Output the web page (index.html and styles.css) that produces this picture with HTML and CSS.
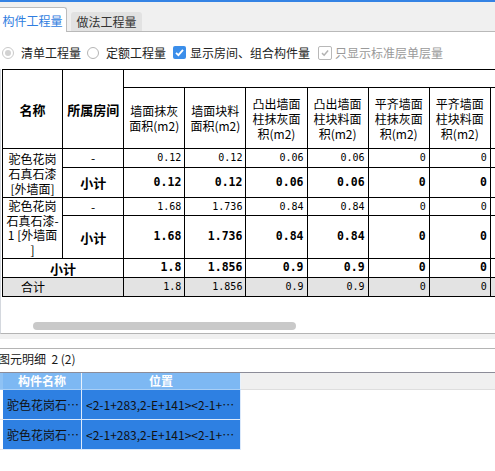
FILE: index.html
```html
<!DOCTYPE html>
<html lang="zh">
<head>
<meta charset="utf-8">
<title>构件工程量</title>
<link rel="stylesheet" href="styles.css">
</head>
<body>
<div class="topbar"></div>
<div class="tabs">
  <div class="tab active">构件工程量</div>
  <div class="tab">做法工程量</div>
</div>
<div class="options">
  <label class="opt"><span class="radio dim"></span>清单工程量</label>
  <label class="opt"><span class="radio"></span>定额工程量</label>
  <label class="opt"><span class="check on"><svg viewBox="0 0 13 13" width="13" height="13"><path d="M3 6.8 L5.4 9.2 L10 3.8" fill="none" stroke="#fff" stroke-width="1.8"/></svg></span>显示房间、组合构件量</label>
  <label class="opt disabled"><span class="check off"><svg viewBox="0 0 14 14" width="14" height="14"><path d="M3.5 7.2 L6 9.6 L10.6 4.2" fill="none" stroke="#b3b3b3" stroke-width="1.8"/></svg></span>只显示标准层单层量</label>
</div>
<div class="table-area">
  <table class="qty">
    <colgroup>
      <col class="c1"><col class="cn"><col class="cn"><col class="cn"><col class="cn"><col class="cn"><col class="cn"><col class="cn"><col class="cn">
    </colgroup>
    <thead>
      <tr class="r-h1">
        <th rowspan="2" class="hb">名称</th>
        <th rowspan="2" class="hb">所属房间</th>
        <th colspan="7" class="group"></th>
      </tr>
      <tr class="r-h2">
        <th>墙面抹灰<br>面积(m2)</th>
        <th>墙面块料<br>面积(m2)</th>
        <th>凸出墙面<br>柱抹灰面<br>积(m2)</th>
        <th>凸出墙面<br>柱块料面<br>积(m2)</th>
        <th>平齐墙面<br>柱抹灰面<br>积(m2)</th>
        <th>平齐墙面<br>柱块料面<br>积(m2)</th>
        <th></th>
      </tr>
    </thead>
    <tbody>
      <tr class="r-a1">
        <td rowspan="2" class="name">驼色花岗<br>石真石漆<br>[外墙面]</td>
        <td class="room">-</td>
        <td class="num">0.12</td><td class="num">0.12</td><td class="num">0.06</td><td class="num">0.06</td><td class="num">0</td><td class="num">0</td><td class="num"></td>
      </tr>
      <tr class="r-a2">
        <td class="room sub">小计</td>
        <td class="num b">0.12</td><td class="num b">0.12</td><td class="num b">0.06</td><td class="num b">0.06</td><td class="num b">0</td><td class="num b">0</td><td class="num b"></td>
      </tr>
      <tr class="r-b1">
        <td rowspan="2" class="name tight">驼色花岗<br>石真石漆-<br>1 [外墙面<br>]</td>
        <td class="room">-</td>
        <td class="num">1.68</td><td class="num">1.736</td><td class="num">0.84</td><td class="num">0.84</td><td class="num">0</td><td class="num">0</td><td class="num"></td>
      </tr>
      <tr class="r-b2">
        <td class="room sub">小计</td>
        <td class="num b">1.68</td><td class="num b">1.736</td><td class="num b">0.84</td><td class="num b">0.84</td><td class="num b">0</td><td class="num b">0</td><td class="num b"></td>
      </tr>
      <tr class="r-s">
        <td colspan="2" class="room sub">小计</td>
        <td class="num b">1.8</td><td class="num b">1.856</td><td class="num b">0.9</td><td class="num b">0.9</td><td class="num b">0</td><td class="num b">0</td><td class="num b"></td>
      </tr>
      <tr class="r-t">
        <td colspan="2" class="total">合计</td>
        <td class="num">1.8</td><td class="num">1.856</td><td class="num">0.9</td><td class="num">0.9</td><td class="num">0</td><td class="num">0</td><td class="num"></td>
      </tr>
    </tbody>
  </table>
  <div class="hscroll"><div class="thumb"></div></div>
</div>
<div class="splitter"></div>
<div class="detail-title">图元明细&nbsp; 2 (2)</div>
<div class="grid">
  <div class="g-edge g-head"></div>
  <div class="g-head g-col">构件名称</div>
  <div class="g-head g-col">位置</div>
  <div class="g-head g-rest"></div>

  <div class="g-edge"></div>
  <div class="g-cell">驼色花岗石真石漆[外墙面]</div>
  <div class="g-cell">&lt;2-1+283,2-E+141&gt;&lt;2-1+283,2-E+141&gt;</div>
  <div class="g-empty"></div>

  <div class="g-edge"></div>
  <div class="g-cell">驼色花岗石真石漆-1 [外墙面]</div>
  <div class="g-cell">&lt;2-1+283,2-E+141&gt;&lt;2-1+283,2-E+141&gt;</div>
  <div class="g-empty"></div>
</div>
</body>
</html>
```
FILE: styles.css
```css
* { box-sizing: border-box; }
html, body { margin: 0; padding: 0; }
body {
  width: 495px;
  height: 471px;
  overflow: hidden;
  background: #fff;
  color: #1a1a1a;
  font-family: "Noto Sans CJK SC", "Microsoft YaHei", sans-serif;
  font-size: 12px;
}

.topbar { height: 2px; background: #3583e4; }

.tabs {
  height: 30px;
  background: #f0f0f0;
  border-bottom: 1px solid #b9b9b9;
  display: flex;
  align-items: flex-end;
}
.tab {
  display: flex;
  align-items: center;
  justify-content: center;
  line-height: 1;
}
.tab.active {
  width: 69px;
  height: 25px;
  margin-left: -2px;
  margin-bottom: -1px;
  padding-top: 2px;
  background: #fff;
  border: 1px solid #bcbcbc;
  border-bottom: none;
  border-radius: 0 3px 0 0;
  color: #2f7de0;
}
.tab:not(.active) {
  width: 71px;
  height: 19px;
  margin-left: 4px;
  background: #e2e2e2;
  border-radius: 3px 3px 0 0;
  color: #333;
}

.options {
  height: 37px;
  padding: 4px 0 0 2px;
  display: flex;
  align-items: center;
  color: #222;
}
.opt { display: flex; align-items: center; line-height: 1; margin-right: 6px; }
.opt.disabled { color: #9a9a9a; }
.radio {
  width: 12px; height: 12px;
  border-radius: 50%;
  border: 1px solid #b5b5b5;
  background: #fff;
  margin-right: 7px;
  display: flex; align-items: center; justify-content: center;
}
.radio.dim { border-color: #c9c9c9; }
.radio.dim::after {
  content: "";
  width: 6px; height: 6px; border-radius: 50%;
  background: #d2d2d2;
}
.check {
  width: 13px; height: 13px;
  border-radius: 2px;
  margin: 0 4px 0 1px;
  display: flex; align-items: center; justify-content: center;
}
.check svg { display: block; }
.check.on { background: #3b8eea; }
.check.off {
  width: 14px; height: 14px;
  border: 1px solid #b8b8b8;
  background: #fff;
  margin: 0 3px 0 2px;
}
.check.off svg { width: 12px; height: 12px; }

.table-area {
  height: 265px;
  overflow: hidden;
  border-bottom: 1px solid #b4b4b4;
  border-left: 1px solid #d4d8de;
}
.qty {
  border-collapse: collapse;
  table-layout: fixed;
  width: 550px;
  margin-left: 1px;
  color: #000;
}
.qty col.c1 { width: 60px; }
.qty col.cn { width: 61px; }
.qty th, .qty td {
  border: 1px solid #000;
  padding: 0;
  overflow: hidden;
  white-space: nowrap;
}
.qty th {
  font-weight: normal;
  font-size: 12px;
  line-height: 15px;
  text-align: center;
  vertical-align: middle;
}
.qty th.hb { font-weight: bold; font-size: 13px; }
.qty th.group { border-left-color: #000; }

.r-h1 { height: 18px; }
.r-h2 { height: 61px; }
.r-a1 { height: 19px; }
.r-a2 { height: 30px; }
.r-b1 { height: 18px; }
.r-b2 { height: 43px; }
.r-s { height: 19px; }
.r-t { height: 19px; background: #e3e3e3; }

.qty td.name {
  text-align: center;
  vertical-align: middle;
  line-height: 15px;
  font-size: 12px;
}
.qty td.name.tight { line-height: 14.5px; }
.qty td.room { text-align: center; font-size: 12px; line-height: 1; }
.qty td.sub { font-weight: bold; font-size: 13px; }
.qty td.total { padding-left: 18px; font-size: 12px; line-height: 1; }
.qty td.num {
  text-align: right;
  padding-right: 3px;
  font-family: "DejaVu Sans Mono", "Liberation Mono", monospace;
  font-size: 10px;
  line-height: 1;
}
.qty td.num.b { font-weight: bold; font-size: 11.5px; }

.hscroll { margin: 25px 0 0 32px; height: 8px; width: 263px; }
.thumb { height: 8px; border-radius: 4px; background: #c9c9c9; }

.splitter {
  height: 15px;
  border-bottom: 1px solid #b4b4b4;
  background: linear-gradient(#f0f0f0 0 5px, #fff 5px);
}
.detail-title {
  height: 23px;
  line-height: 19px;
  margin-left: -2px;
  white-space: nowrap;
  color: #1a1a1a;
}

.grid {
  display: grid;
  grid-template-columns: 3px 79px 159px 1fr;
  grid-template-rows: 17px 30px 30px;
  border-top: 1px solid #8c8c98;
}
.g-head { background: #7db8f3; }
.g-col {
  color: #fff;
  font-weight: bold;
  text-align: center;
  line-height: 16px;
  border-right: 1px solid #e8f2fd;
  border-bottom: 1px solid #a9cff6;
}
.g-edge { background: #fff; border-bottom: 1px solid #e6e6e6; }
.g-edge.g-head { background: #8fc2f4; border-bottom: 1px solid #a9cff6; }
.g-rest { background: #f0f0f0; border-bottom: 1px solid #dedede; }
.g-cell {
  background: #2e80e2;
  color: #111;
  line-height: 29px;
  padding-left: 4px;
  white-space: nowrap;
  overflow: hidden;
  text-overflow: ellipsis;
  border-right: 1px solid #dbe9fb;
  border-bottom: 1px solid #dbe9fb;
}
.g-empty { background: #fff; }
```
